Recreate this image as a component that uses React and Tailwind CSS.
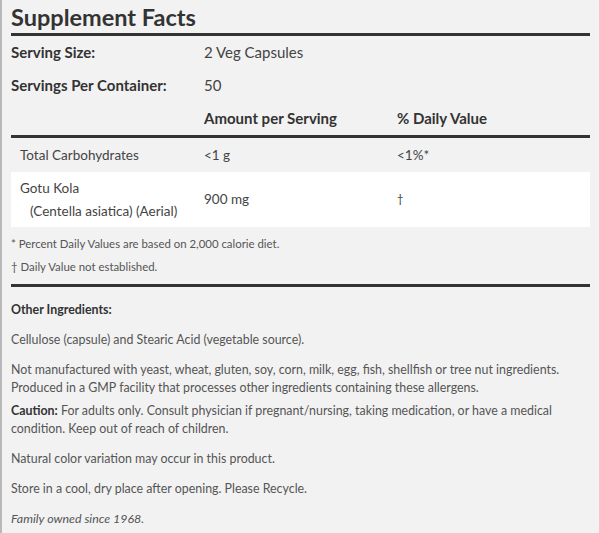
import React from "react";

const Rule = () => <div className="h-[3px] bg-[#333333] w-[579px]" />;

const App = () => {
  return (
    <div
      className="w-[599px] h-[533px] bg-[#f2f2f2] border-l-2 border-[#b8b8b8] overflow-hidden"
      style={{ fontFamily: "Lato, 'Open Sans', sans-serif" }}
    >
      <div className="pl-[9px]">
        <h1 className="h-[33px] pt-[3px] text-[23.5px] leading-[28px] font-bold text-[#333333]">
          Supplement Facts
        </h1>
        <Rule />

        <div className="w-[579px] text-[15px] text-[#333333]">
          <div className="grid grid-cols-[193px_193px_1fr] h-[33px] items-center">
            <span className="font-bold">Serving Size:</span>
            <span className="text-[#444444]">2 Veg Capsules</span>
          </div>
          <div className="grid grid-cols-[193px_193px_1fr] h-[33px] items-center">
            <span className="font-bold">Servings Per Container:</span>
            <span className="text-[#444444]">50</span>
          </div>
          <div className="grid grid-cols-[193px_193px_1fr] h-[33px] items-center font-bold">
            <span></span>
            <span>Amount per Serving</span>
            <span>% Daily Value</span>
          </div>
        </div>
        <Rule />

        <div className="w-[579px] text-[13.5px] text-[#444444]">
          <div className="grid grid-cols-[193px_193px_1fr] h-[34px] items-center">
            <span className="pl-[9px]">Total Carbohydrates</span>
            <span>&lt;1 g</span>
            <span>&lt;1%*</span>
          </div>
          <div className="grid grid-cols-[193px_193px_1fr] h-[55px] items-center bg-white">
            <div className="pl-[9px] leading-[23px]">
              <div>Gotu Kola</div>
              <div className="pl-[10px]">(Centella asiatica) (Aerial)</div>
            </div>
            <span>900 mg</span>
            <span className="text-[11px] text-[#333333]">†</span>
          </div>
        </div>

        <div className="text-[11.4px] text-[#555555] pt-[5px] pb-[6px]">
          <p className="h-[23px] leading-[23px]">* Percent Daily Values are based on 2,000 calorie diet.</p>
          <p className="h-[23px] leading-[23px]">† Daily Value not established.</p>
        </div>
        <Rule />

        <div className="text-[12.4px] leading-[18px] text-[#555555] pt-[14px] w-[579px]">
          <p className="font-bold text-[#333333] mb-[12px]">Other Ingredients:</p>
          <p className="mb-[12px]">Cellulose (capsule) and Stearic Acid (vegetable source).</p>
          <p className="mb-[5px]">
            Not manufactured with yeast, wheat, gluten, soy, corn, milk, egg, fish, shellfish or tree nut ingredients.
            <br />
            Produced in a GMP facility that processes other ingredients containing these allergens.
          </p>
          <p className="mb-[12px]">
            <span className="font-bold text-[#333333]">Caution:</span> For adults only. Consult physician if pregnant/nursing, taking medication, or have a medical
            <br />
            condition. Keep out of reach of children.
          </p>
          <p className="mb-[12px]">Natural color variation may occur in this product.</p>
          <p className="mb-[12px]">Store in a cool, dry place after opening. Please Recycle.</p>
          <p className="italic">Family owned since 1968.</p>
        </div>
      </div>
    </div>
  );
};

export default App;
